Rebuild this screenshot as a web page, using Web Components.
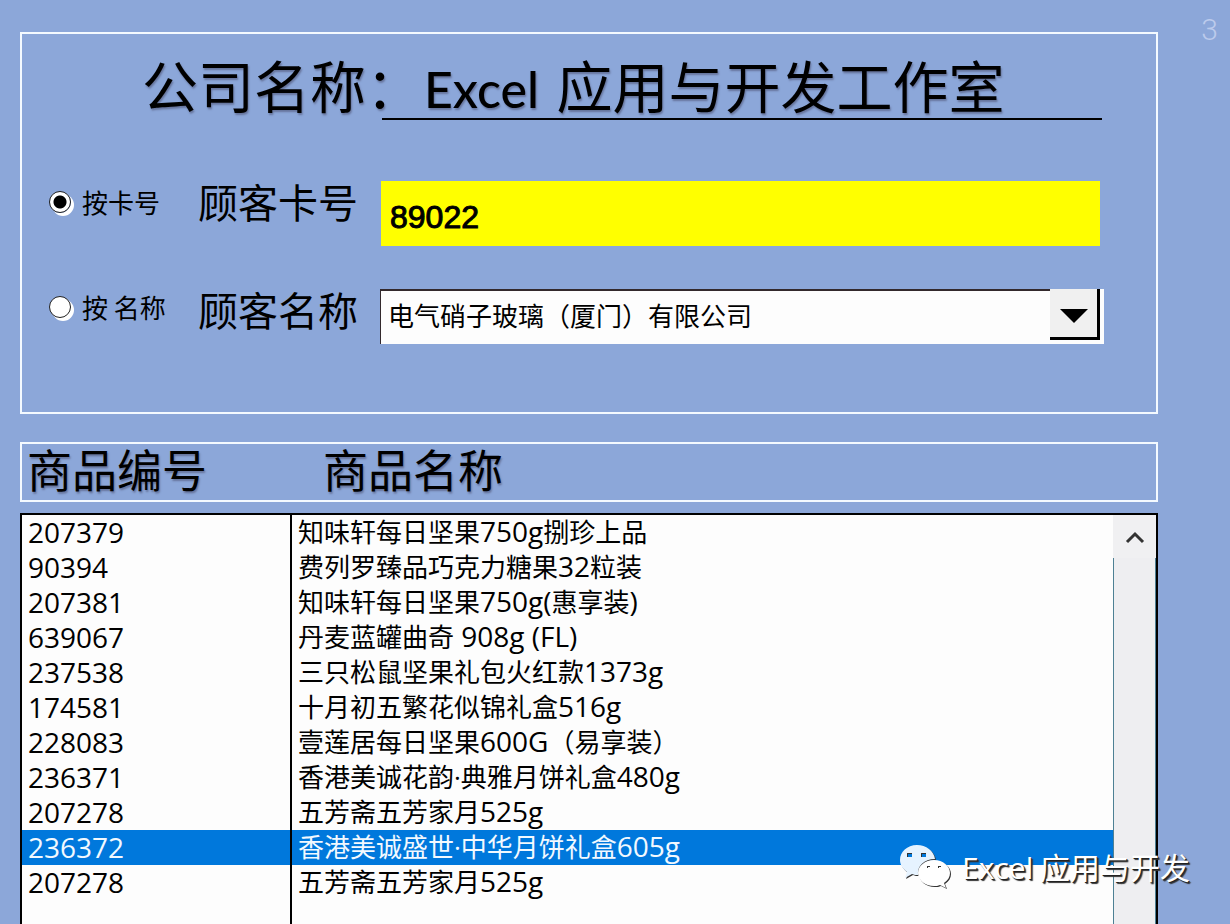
<!DOCTYPE html>
<html lang="zh-CN">
<head>
<meta charset="utf-8">
<meta name="viewport" content="width=device-width, initial-scale=1">
<title>Excel 应用与开发工作室</title>
<style>
  html, body { margin: 0; }
  body {
    background: #8ca7d9;
    color: #000;
    font-family: "Open Sans", "Noto Sans CJK SC", sans-serif;
  }
</style>
</head>
<body>
<customer-app></customer-app>

<script>
const CJK = '"Noto Sans CJK SC", sans-serif';

class CustomerApp extends HTMLElement {
  constructor() {
    super();
    this.attachShadow({ mode: "open" }).innerHTML = `
      <style>
        :host { display: flex; flex-direction: column; min-height: 100vh; box-sizing: border-box;
                padding: 32px 72px 0 20px; position: relative; overflow: hidden; }
        .page { position: absolute; top: 8px; right: 12px; font: 300 30px/44px Roboto, sans-serif; color: #bccbec; }
        column-bar { margin: 28px 0 11px; }
        product-list { flex: 1; }
        wechat-mark { position: absolute; right: 40px; bottom: 32px; }
      </style>
      <span class="page">3</span>
      <search-panel></search-panel>
      <column-bar><span>商品编号</span><span slot="name">商品名称</span></column-bar>
      <product-list></product-list>
      <wechat-mark>应用与开发</wechat-mark>`;
  }
}

class SearchPanel extends HTMLElement {
  constructor() {
    super();
    this.attachShadow({ mode: "open" }).innerHTML = `
      <style>
        :host { display: block; border: 2px solid #f4faff; padding: 17px 52px 68px 27px; }
        h1 { display: flex; align-items: stretch; margin: 0 2px 61px 0; font: 400 56px/66px ${CJK};
             height: 69px; text-shadow: 1px 2px 2px #66749c; white-space: nowrap; }
        .caption { flex: 0 0 333px; text-align: right; }
        .caption i { font-style: normal; display: inline-block; width: 16px; overflow: visible; text-align: left; }
        .company { flex: 1; border-bottom: 2px solid #000; padding-left: 42px; }
        .company b { font: 500 50px/66px Lato, sans-serif; margin-right: 5px; }
        search-row + search-row { margin-top: 43px; --option-height: 36px; }
      </style>
      <h1><span class="caption">公司名称<i>：</i></span><span class="company"><b>Excel </b>应用与开发工作室</span></h1>
      <search-row option="按卡号" label="顾客卡号" checked><card-field></card-field></search-row>
      <search-row option="按 名称" label="顾客名称"><name-field></name-field></search-row>`;
    const rows = [...this.shadowRoot.querySelectorAll("search-row")];
    this.addEventListener("pick", e => rows.forEach(r => { r.picked = r === e.detail; }));
  }
}

class SearchRow extends HTMLElement {
  connectedCallback() {
    if (this.shadowRoot) return;
    this.attachShadow({ mode: "open" }).innerHTML = `
      <style>
        :host { display: grid; grid-template-columns: 149px 182px 1fr; align-items: start; }
        label { display: flex; align-items: center; gap: 11px; height: var(--option-height, 42px);
                font: 26px/38px ${CJK}; white-space: nowrap; }
        input { appearance: none; box-sizing: border-box; width: 22px; height: 22px; margin: 0; border-radius: 50%;
                border: 1px solid #222; background: #fff; box-shadow: 3px 3px 0 #fff; }
        input:checked { background: radial-gradient(circle, #000 6px, #fff 7px); }
        .label { font: 40px/40px ${CJK}; }
      </style>
      <label><input type="radio" name="mode"><span></span></label>
      <span class="label"></span>
      <slot></slot>`;
    this.shadowRoot.querySelector("label span").textContent = this.getAttribute("option");
    this.shadowRoot.querySelector(".label").textContent = this.getAttribute("label");
    this.picked = this.hasAttribute("checked");
    this.shadowRoot.querySelector("input").addEventListener("change", () =>
      this.dispatchEvent(new CustomEvent("pick", { detail: this, bubbles: true, composed: true })));
  }
  set picked(on) { this.shadowRoot.querySelector("input").checked = on; }
}

class CardField extends HTMLElement {
  constructor() {
    super();
    this.attachShadow({ mode: "open" }).innerHTML = `
      <style>
        :host { display: block; padding: 0 4px 0 1px; }
        input { display: block; box-sizing: border-box; width: 100%; height: 65px; margin: 0; border: 0; border-radius: 0;
                padding: 8px 9px 0; background: #ff0; color: #000; font: 32px/40px "Liberation Sans", sans-serif;
                -webkit-text-stroke: 1px #000; }
      </style>
      <input type="text" value="89022" aria-label="顾客卡号">`;
  }
}

class NameField extends HTMLElement {
  constructor() {
    super();
    this.attachShadow({ mode: "open" }).innerHTML = `
      <style>
        :host { display: grid; grid-template-columns: 1fr 50px 4px; grid-template-rows: 51px 4px; background: #fdfdfd; }
        select { grid-area: 1 / 1 / 3 / 4; appearance: none; margin: 0; border: 0; border-radius: 0; padding: 0 8px 3px;
                 background: transparent; color: #000; font: 26px/36px ${CJK};
                 box-shadow: inset 1px 2px 0 #33292c; }
        .arrow { grid-area: 1 / 2; box-sizing: border-box; border: solid #000; border-width: 0 3px 3px 0; background: #f0f0f0;
                 display: grid; place-items: center; padding-top: 6px; pointer-events: none; }
        .edge { grid-area: 1 / 3 / 3 / 4; background: #fdfdfd; pointer-events: none; }
      </style>
      <select aria-label="顾客名称"><option>电气硝子玻璃（厦门）有限公司</option></select>
      <span class="arrow"><svg width="28" height="14" viewBox="0 0 28 14"><path d="M0 0h28L14 14z"/></svg></span>
      <span class="edge"></span>`;
  }
}

class ColumnBar extends HTMLElement {
  constructor() {
    super();
    this.attachShadow({ mode: "open" }).innerHTML = `
      <style>
        :host { display: grid; grid-template-columns: 296px 1fr; border: 2px solid #f4faff; padding: 0 5px 6px;
                font: 45px/50px ${CJK}; text-shadow: 1px 2px 2px #66749c; }
      </style>
      <slot></slot><slot name="name"></slot>`;
  }
}

class ProductList extends HTMLElement {
  constructor() {
    super();
    const products = [
      ["207379", "知味轩每日坚果750g捌珍上品"],
      ["90394", "费列罗臻品巧克力糖果32粒装"],
      ["207381", "知味轩每日坚果750g(惠享装)"],
      ["639067", "丹麦蓝罐曲奇 908g (FL)"],
      ["237538", "三只松鼠坚果礼包火红款1373g"],
      ["174581", "十月初五繁花似锦礼盒516g"],
      ["228083", "壹莲居每日坚果600G（易享装）"],
      ["236371", "香港美诚花韵·典雅月饼礼盒480g"],
      ["207278", "五芳斋五芳家月525g"],
      ["236372", "香港美诚盛世·中华月饼礼盒605g"],
      ["207278", "五芳斋五芳家月525g"],
    ];
    const latin = name => name.replace(/[ -~]+/g, run => `<span>${run}</span>`);
    const rows = products.map(([id, name], i) =>
      `<tr${i === 9 ? ' aria-selected="true"' : ""}><td>${id}</td><td>${latin(name)}</td></tr>`).join("");
    this.attachShadow({ mode: "open" }).innerHTML = `
      <style>
        :host { display: grid; grid-template-columns: 1fr 43px; border: 2px solid #000; border-bottom: 0; background: #fdfdfd; }
        .rows { background: linear-gradient(#000, #000) 268px 0 / 2px 100% no-repeat; }
        table { width: 100%; table-layout: fixed; border-collapse: separate; border-spacing: 0; }
        col:first-child { width: 270px; }
        td { height: 35px; padding: 0 6px; box-sizing: border-box; white-space: nowrap;
             font: 26px/35px "Open Sans", ${CJK}; }
        td span { font-size: 28px; line-height: 1; }
        td:first-child { font-size: 28px; border-right: 2px solid #000; }
        tr[aria-selected] { background: #0078dc; color: #f2f9ff; }
        .bar { display: flex; flex-direction: column; background: #eeeef1; }
        .bar button { height: 43px; border: 0; padding: 0; background: #f0f0f2; display: grid; place-items: center; }
        .track { flex: 1; border: solid #4d8094; border-width: 0 1px; }
      </style>
      <div class="rows"><table aria-label="商品"><colgroup><col><col></colgroup><tbody>${rows}</tbody></table></div>
      <div class="bar">
        <button type="button" aria-label="向上滚动"><svg width="20" height="14" viewBox="0 0 20 14"><path d="M2 12l8-8 8 8" fill="none" stroke="#333" stroke-width="3"/></svg></button>
        <div class="track"></div>
      </div>`;
    const trs = [...this.shadowRoot.querySelectorAll("tr")];
    trs.forEach(tr => tr.addEventListener("click", () => {
      trs.forEach(t => t.removeAttribute("aria-selected"));
      tr.setAttribute("aria-selected", "true");
    }));
  }
}

class WechatMark extends HTMLElement {
  constructor() {
    super();
    this.attachShadow({ mode: "open" }).innerHTML = `
      <style>
        :host { display: flex; align-items: center; gap: 11px; color: #fff; font: 30px/48px ${CJK};
                text-shadow: 1px 1px 0 #222, 2px 2px 1px #333; white-space: nowrap; pointer-events: none; }
        svg { filter: drop-shadow(1px 1px 0 #333); }
        .latin { font-family: "Open Sans", sans-serif; font-size: 30px; }
      </style>
      <svg width="52" height="46" viewBox="0 0 52 46">
        <path fill="#e6f3ff" fill-rule="evenodd" d="M18 1C8 1 1 8 1 16c0 5 3 9 7 12l-2 6 7-4c2 1 4 1 6 1-1-9 6-16 17-16C35 7 27 1 18 1zM8 9h5v4H8zM22 9h5v4h-5z"/>
        <path fill="#fff" fill-rule="evenodd" d="M35 16c-9 0-16 6-16 13s7 13 16 13c2 0 4 0 6-1l6 3-2-5c4-3 6-6 6-10 0-7-7-13-16-13zM28 22h3v2h-3zM39 22h3v2h-3z"/>
      </svg>
      <span><span class="latin">Excel</span> <slot></slot></span>`;
  }
}

customElements.define("card-field", CardField);
customElements.define("name-field", NameField);
customElements.define("search-row", SearchRow);
customElements.define("search-panel", SearchPanel);
customElements.define("column-bar", ColumnBar);
customElements.define("product-list", ProductList);
customElements.define("wechat-mark", WechatMark);
customElements.define("customer-app", CustomerApp);
</script>
</body>
</html>
